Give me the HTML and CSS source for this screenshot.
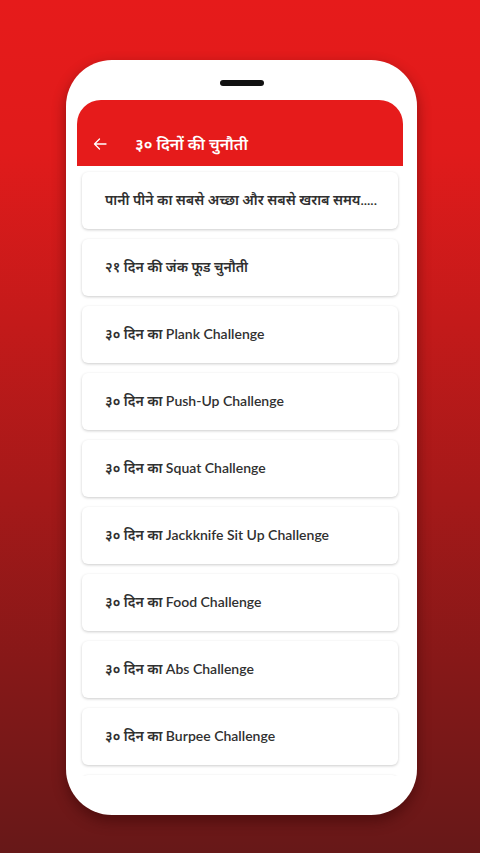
FILE: index.html
```html
<!DOCTYPE html>
<html lang="hi">
<head>
<meta charset="utf-8">
<title>३० दिनों की चुनौती</title>
<link rel="stylesheet" href="styles.css">
</head>
<body>
<div class="phone">
  <div class="speaker"></div>
  <div class="screen">
    <header class="appbar">
      <svg class="back" width="14" height="12" viewBox="0 0 14 12"><path d="M13 6H1.5M6.5 1L1.5 6l5 5" fill="none" stroke="#fff" stroke-width="1.3" stroke-linecap="round" stroke-linejoin="round"/></svg>
      <h1 class="title">३० दिनों की चुनौती</h1>
    </header>
    <div class="list">
      <div class="card">पानी पीने का सबसे अच्छा और सबसे खराब समय.....</div>
      <div class="card">२१ दिन की जंक फूड चुनौती</div>
      <div class="card">३० दिन का Plank Challenge</div>
      <div class="card">३० दिन का Push-Up Challenge</div>
      <div class="card">३० दिन का Squat Challenge</div>
      <div class="card">३० दिन का Jackknife Sit Up Challenge</div>
      <div class="card">३० दिन का Food Challenge</div>
      <div class="card">३० दिन का Abs Challenge</div>
      <div class="card">३० दिन का Burpee Challenge</div>
      <div class="card"></div>
    </div>
  </div>
</div>
</body>
</html>
```
FILE: styles.css
```css
html, body {
  margin: 0;
  padding: 0;
}
body {
  width: 480px;
  height: 853px;
  overflow: hidden;
  background: linear-gradient(to bottom, #e61b1b 0%, #e01b1b 18%, #c31a1a 38%, #a51919 58%, #861818 78%, #671818 100%);
  font-family: "Lato", "Noto Sans Devanagari", "Noto Sans", sans-serif;
  padding-top: 60px;
  box-sizing: border-box;
}
.phone {
  margin-left: 66px;
  width: 351px;
  height: 755px;
  background: #fff;
  border-radius: 46px;
  box-shadow: 0 6px 14px rgba(40, 0, 0, 0.45);
  box-sizing: border-box;
  padding: 20px 14px 0 11px;
  display: flex;
  flex-direction: column;
}
.speaker {
  width: 44px;
  height: 6px;
  border-radius: 3px;
  background: #111;
  align-self: center;
  margin-left: 3px;
}
.screen {
  margin-top: 14px;
  height: 676px;
  overflow: hidden;
  display: flex;
  flex-direction: column;
}
.appbar {
  height: 66px;
  flex: none;
  background: #e61b1b;
  border-radius: 24px 24px 0 0;
  display: flex;
  align-items: center;
  padding: 22px 0 0 16px;
  box-sizing: border-box;
}
.back {
  flex: none;
}
.title {
  margin: 0 0 0 28px;
  color: #fff;
  font-size: 16px;
  font-weight: 600;
  line-height: 24px;
}
.list {
  display: flex;
  flex-direction: column;
  gap: 10px;
  padding: 6px 5px 0 5px;
}
.card {
  flex: none;
  height: 57px;
  background: #fff;
  border-radius: 6px;
  box-shadow: 0 1px 3px rgba(0, 0, 0, 0.2);
  display: flex;
  align-items: center;
  padding-left: 23px;
  box-sizing: border-box;
  font-size: 14px;
  font-weight: 600;
  color: #303030;
}
```
